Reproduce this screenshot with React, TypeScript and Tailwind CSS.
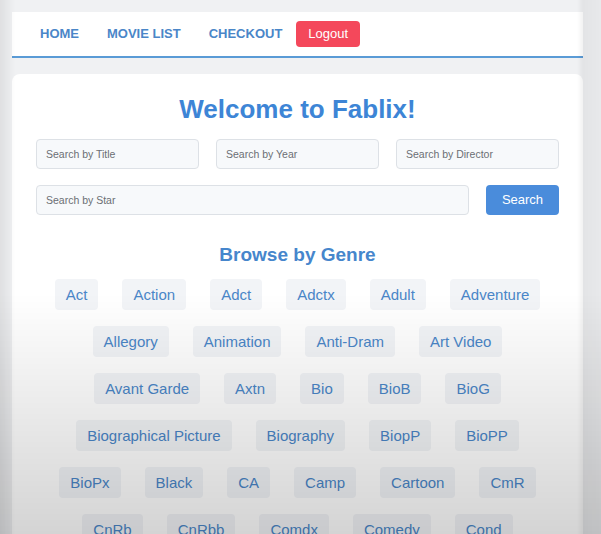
import React from 'react';

const genres = [
  'Act', 'Action', 'Adct', 'Adctx', 'Adult', 'Adventure',
  'Allegory', 'Animation', 'Anti-Dram', 'Art Video',
  'Avant Garde', 'Axtn', 'Bio', 'BioB', 'BioG',
  'Biographical Picture', 'Biography', 'BiopP', 'BioPP',
  'BioPx', 'Black', 'CA', 'Camp', 'Cartoon', 'CmR',
  'CnRb', 'CnRbb', 'Comdx', 'Comedy', 'Cond',
  'Costume Drama', 'Crime', 'Cult', 'Disaster', 'Documentary', 'Drama',
];

const inputCls =
  'h-[30px] w-full rounded-[4px] border border-[#dde1e6] bg-[#f7f9fb] px-[9px] text-[10.5px] text-[#555] placeholder:text-[#6b6f74] outline-none';

const App: React.FC = () => {
  return (
    <div className="min-h-screen bg-[#f0f1f3] pl-3 pr-[18px] pt-3 font-['Liberation_Sans',Arial,sans-serif]">
      {/* Nav */}
      <nav className="flex h-[46px] items-center border-b-2 border-[#5a9bd6] bg-white pl-[14px]">
        {['HOME', 'MOVIE LIST', 'CHECKOUT'].map((l) => (
          <a key={l} className="px-[14px] text-[13px] font-bold text-[#4a86c8]">
            {l}
          </a>
        ))}
        <button className="h-[26px] rounded-[4px] bg-[#f4485b] px-3 text-[13px] text-white">
          Logout
        </button>
      </nav>

      {/* Main card */}
      <section className="mt-4 rounded-lg bg-white px-6 pt-[20px] pb-10">
        <h1 className="text-center text-[26px] leading-[31px] font-bold text-[#3d85d6]">
          Welcome to Fablix!
        </h1>

        <div className="mt-[14px] grid grid-cols-3 gap-[17px]">
          <input className={inputCls} placeholder="Search by Title" />
          <input className={inputCls} placeholder="Search by Year" />
          <input className={inputCls} placeholder="Search by Director" />
        </div>
        <div className="mt-[16px] flex gap-[17px]">
          <input className={inputCls} placeholder="Search by Star" />
          <button className="h-[30px] w-[73px] shrink-0 rounded-[4px] bg-[#4a8cdb] text-[13px] text-white">
            Search
          </button>
        </div>

        <h2 className="mt-[28px] text-center text-[19px] leading-[23px] font-bold text-[#4686cc]">
          Browse by Genre
        </h2>
        <div className="mt-[13px] flex flex-wrap justify-center gap-x-6 gap-y-4">
          {genres.map((g) => (
            <span
              key={g}
              className="h-[31px] rounded-[4px] bg-[#f2f4f7] px-[11px] text-[15px] leading-[31px] text-[#4a86c8]"
            >
              {g}
            </span>
          ))}
        </div>
      </section>

      {/* vignette over the captured frame */}
      <div className="pointer-events-none fixed inset-0 bg-gradient-to-b from-transparent from-55% to-[rgba(0,0,0,0.17)]" />
      <div className="pointer-events-none fixed inset-0 bg-[linear-gradient(to_right,rgba(0,0,0,0.07),transparent_2.5%,transparent_96%,rgba(0,0,0,0.05)_97%,rgba(0,0,0,0.03))]" />
    </div>
  );
};

export default App;
